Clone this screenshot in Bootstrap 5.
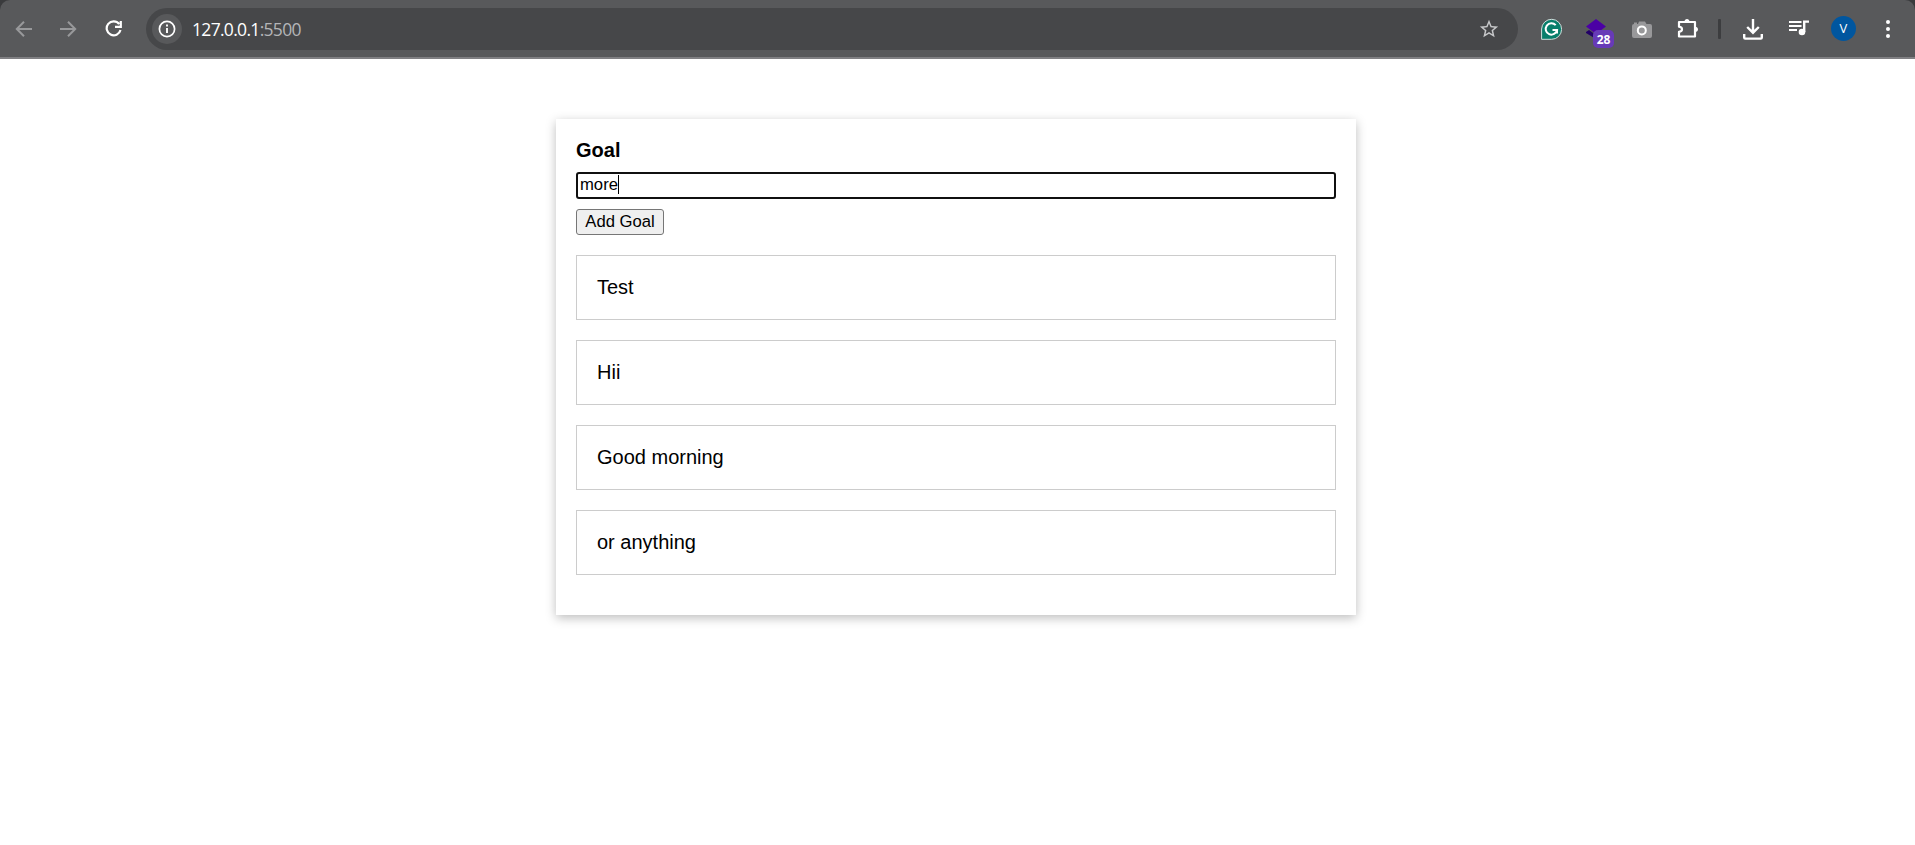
<!DOCTYPE html>
<html lang="en">
<head>
<meta charset="utf-8">
<meta name="viewport" content="width=device-width, initial-scale=1">
<title>Goals</title>
<link rel="stylesheet" href="https://cdn.jsdelivr.net/npm/bootstrap@5.3.0/dist/css/bootstrap.min.css">
<style>
  body { font-family: "Liberation Sans", Arial, sans-serif; font-size: 20px; line-height: 23px; color: #000; }
  .browser { background: #3a3b3d; height: 59px; }
  .toolbar { background: #58595b; border-bottom: 2px solid #808083; border-radius: 10px 10px 0 0; height: 59px; padding-top: 1px; }
  .toolbar svg { display: block; flex: none; }
  .slot { width: 45px; display: flex; justify-content: center; flex: none; }
  .nav-icon { margin-top: -1px; }
  .address { background: #464749; height: 42px; width: 1372px; border-radius: 21px; padding: 0 18px 0 6px; }
  .info { width: 30px; height: 30px; background: #58595b; }
  .url { font-family: "Open Sans", "Noto Sans", sans-serif; font-size: 17.5px; letter-spacing: -.69px; color: #fff; margin-left: 10px; }
  .url span { color: #b4b5b7; }
  .count { position: absolute; left: 7px; top: 11px; width: 21px; height: 18px; border-radius: 5px; background: #673ab7; color: #fff; font: 700 12px/19px "Open Sans", sans-serif; text-align: center; }
  .divider { width: 3px; height: 20px; background: #3c3d3f; border-radius: 1px; }
  .avatar { width: 25px; height: 25px; background: #00569f; color: #fff; font: 13px/25px "Open Sans", sans-serif; text-align: center; }
  .panel { width: 800px; margin: 60px 0 0 556px; padding: 20px; box-shadow: 0 2.5px 10px rgba(0,0,0,.26); }
  .goal-input { height: 27px; border: 2px solid #101010; border-radius: 3px; padding: 0 2px 2px; font-size: 16.67px; line-height: 19px; margin: 10px 0; }
  .add { width: 88px; height: 26px; border: 1px solid #767676; border-radius: 3px; background: #efefef; font-size: 16.67px; line-height: 19px; padding: 0 0 2px; color: #000; display: block; }
  .caret { width: 1px; height: 19px; background: #000; }
  .goals li { border: 1px solid #ccc; padding: 20px; margin: 20px 0; }
</style>
</head>
<body class="min-vh-100">
<header class="browser">
  <div class="toolbar d-flex align-items-center">
    <div class="slot nav-icon"><svg style="margin-left:2px" width="18" height="18" viewBox="0 0 18 18" fill="none" stroke="#98999b" stroke-width="2"><path d="M17 9H2M9 1.8 1.8 9 9 16.2"/></svg></div>
    <div class="slot nav-icon"><svg style="margin-left:1px" width="18" height="18" viewBox="0 0 18 18" fill="none" stroke="#98999b" stroke-width="2"><path d="M1 9h15M9 1.8 16.2 9 9 16.2"/></svg></div>
    <div class="slot nav-icon"><svg style="margin-left:2px" width="18" height="18" viewBox="0 0 18 18" fill="none" stroke="#fff" stroke-width="2.2"><path d="M14.2 4A7 7 0 1 0 15.5 10M15.8 1v5.8H10"/></svg></div>
    <div class="address d-flex align-items-center" style="margin-left:11px">
      <div class="info rounded-circle d-flex align-items-center justify-content-center"><svg width="18" height="18" viewBox="0 0 18 18"><circle cx="9" cy="9" r="7.6" fill="none" stroke="#fff" stroke-width="1.7"/><path d="M9 8v5M9 4.6v2" stroke="#fff" stroke-width="1.9"/></svg></div>
      <div class="url">127.0.0.1<span>:5500</span></div>
      <svg class="ms-auto" width="22" height="22" viewBox="0 0 24 24" fill="#c7c8ca"><path d="m22 9.24-7.19-.62L12 2 9.19 8.63 2 9.24l5.46 4.73L5.82 21 12 17.27 18.18 21l-1.63-7.03L22 9.24zM12 15.4l-3.76 2.27 1-4.28-3.32-2.88 4.38-.38L12 6.1l1.71 4.04 4.38.38-3.32 2.88 1 4.28L12 15.4z"/></svg>
    </div>
    <div class="slot" style="margin-left:11px"><svg width="21" height="22" viewBox="0 0 21 22"><path d="M.6 21.3V11A10 10 0 1 1 10.6 21.3Z" fill="#087e6b" stroke="#d0dfdc"/><path d="M14.7 7.2A5.7 5.7 0 1 0 16 12h-4.5M16 12v3.6" fill="none" stroke="#fff" stroke-width="2"/></svg></div>
    <div class="slot"><div class="position-relative" style="margin-right:1px"><svg width="20" height="20" viewBox="0 0 20 20"><path d="m0 13 3-2 7 5v4L0 14z" fill="#220067"/><path d="M10 0 20 7.5 10 15 0 7.5Z" fill="#4b00a5"/></svg><span class="count">28</span></div></div>
    <div class="slot"><svg style="margin-top:2px" width="20" height="18" viewBox="0 0 20 18"><path d="M2 3V1.5h3V3h1l1-2.5h6L14.5 3H18q2 0 2 2v10q0 2-2 2H2q-2 0-2-2V5q0-2 2-2Z" fill="#98989a"/><circle cx="9.8" cy="9.4" r="4" fill="#98989a" stroke="#fff" stroke-width="2"/></svg></div>
    <div class="slot"><svg style="margin-left:2px" width="22" height="22" viewBox="0 0 22 22"><path d="M2 4h16v5v9.5H2v-4.7c4-.5 4-4.600 0-5.100Z" fill="none" stroke="#fff" stroke-width="2.2" stroke-linejoin="round"/><path d="M7.400 4c0-4 5.200-4 5.200 0M18 8.700c4 0 4 5.200 0 5.200" fill="#fff"/></svg></div>
    <div class="divider" style="margin-left:9px"></div>
    <div class="slot" style="margin-left:10px"><svg style="margin-right:1px" width="20" height="21" viewBox="0 0 20 21" fill="none" stroke="#fff" stroke-width="2.4"><path d="M10 0v13M4.2 8 10 13.700 15.800 8M1.200 15v3.600q0 1 1 1h15.600q1 0 1-1V15"/></svg></div>
    <div class="slot"><svg style="margin-top:-3px" width="20" height="16" viewBox="0 0 20 16"><path d="M0 2h12.500M0 6h12.500M0 10h8" stroke="#fff" stroke-width="2"/><circle cx="13" cy="12" r="3.300" fill="#fff"/><path d="M15.200 12V1.600H20" fill="none" stroke="#fff" stroke-width="2.400"/></svg></div>
    <div class="slot nav-icon"><div class="avatar rounded-circle">V</div></div>
    <div class="slot nav-icon"><svg style="margin-right:1px" width="4" height="18" viewBox="0 0 4 18" fill="#fff"><circle cx="2" cy="2" r="2"/><circle cx="2" cy="9" r="2"/><circle cx="2" cy="16" r="2"/></svg></div>
  </div>
</header>
<main class="panel">
  <div class="fw-bold">Goal</div>
  <div class="goal-input d-flex align-items-center">more<span class="caret"></span></div>
  <button class="add" type="button">Add Goal</button>
  <ul class="goals list-unstyled mb-0">
    <li>Test</li>
    <li>Hii</li>
    <li>Good morning</li>
    <li>or anything</li>
  </ul>
</main>
<script src="https://cdn.jsdelivr.net/npm/bootstrap@5.3.0/dist/js/bootstrap.bundle.min.js"></script>
</body>
</html>
